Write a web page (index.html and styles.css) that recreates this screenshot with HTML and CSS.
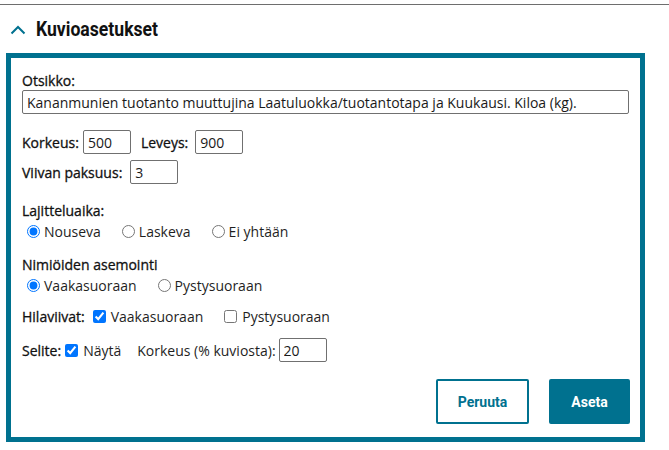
FILE: index.html
```html
<!DOCTYPE html>
<html lang="fi">
<head>
<meta charset="utf-8">
<title>Kuvioasetukset</title>
<link rel="stylesheet" href="styles.css">
</head>
<body>
<div class="topline"></div>
<div class="section-head">
  <svg class="chevron" width="16" height="10" viewBox="0 0 16 10" aria-hidden="true"><polyline points="1.5,8.5 8,2 14.5,8.5" fill="none" stroke="#00718f" stroke-width="2"/></svg>
  <h2 class="section-title"><span class="section-title-text">Kuvioasetukset</span></h2>
</div>
<div class="panel">
  <div class="lbl block">Otsikko:</div>
  <input class="txt title-input" type="text" value="Kananmunien tuotanto muuttujina Laatuluokka/tuotantotapa ja Kuukausi. Kiloa (kg).">

  <div class="row row-size">
    <span class="lbl lbl-k">Korkeus:</span><input class="txt num" type="text" value="500">
    <span class="lbl lbl-l">Leveys:</span><input class="txt num" type="text" value="900">
  </div>
  <div class="row row-line">
    <span class="lbl lbl-v">Viivan paksuus:</span><input class="txt num" type="text" value="3">
  </div>

  <div class="group group-sort">
    <div class="lbl block">Lajitteluaika:</div>
    <div class="opts">
      <label class="opt"><input type="radio" name="sort" checked>Nouseva</label>
      <label class="opt"><input type="radio" name="sort">Laskeva</label>
      <label class="opt"><input type="radio" name="sort">Ei yhtään</label>
    </div>
  </div>

  <div class="group group-pos">
    <div class="lbl block">Nimiöiden asemointi</div>
    <div class="opts">
      <label class="opt"><input type="radio" name="pos" checked>Vaakasuoraan</label>
      <label class="opt"><input type="radio" name="pos">Pystysuoraan</label>
    </div>
  </div>

  <div class="row row-grid">
    <span class="lbl lbl-h">Hilaviivat:</span>
    <label class="chk chk-wide"><input type="checkbox" checked>Vaakasuoraan</label>
    <label class="chk"><input type="checkbox">Pystysuoraan</label>
  </div>

  <div class="row row-legend">
    <span class="lbl lbl-s">Selite:</span>
    <label class="chk chk-mid"><input type="checkbox" checked>Näytä</label>
    <span class="plain">Korkeus (% kuviosta):</span><input class="txt num" type="text" value="20">
  </div>

  <div class="actions">
    <button class="btn btn-outline" type="button">Peruuta</button>
    <button class="btn btn-primary" type="button">Aseta</button>
  </div>
</div>
</body>
</html>
```
FILE: styles.css
```css
html, body {
  margin: 0;
  padding: 0;
  background: #ffffff;
}
body {
  font-family: "Open Sans", "Noto Sans", sans-serif;
  font-size: 14px;
  color: #1f1f1f;
  width: 669px;
  height: 450px;
  overflow: hidden;
}
.topline {
  margin-top: 4px;
  height: 1px;
  background: #6e6e6e;
}
.section-head {
  display: flex;
  align-items: center;
  margin: 12px 0 0 0;
  height: 24px;
}
.chevron {
  margin-left: 10px;
  margin-top: 2px;
}
.section-title {
  margin: 0 0 0 10px;
  font-family: Roboto, "Liberation Sans", sans-serif;
  font-size: 20px;
  font-weight: 700;
  line-height: 24px;
  color: #111111;
}
.section-title-text {
  display: inline-block;
  transform: scaleX(0.88);
  transform-origin: left center;
}
.panel {
  margin: 12px 0 0 6px;
  width: 639px;
  box-sizing: border-box;
  border: 5px solid #00718f;
  padding: 13px 10px 13px 11px;
}
.lbl {
  font-weight: 500;
  color: #111111;
  -webkit-text-stroke: 0.3px #111111;
}
.block {
  display: block;
  line-height: 19px;
}
.txt {
  font-family: "Open Sans", "Noto Sans", sans-serif;
  font-size: 14px;
  color: #1a1a1a;
  height: 24px;
  box-sizing: border-box;
  border: 1px solid #707070;
  border-radius: 2px;
  padding: 0 4px;
  margin: 0;
  background: #fff;
}
.title-input {
  display: block;
  width: 607px;
}
.num {
  width: 48px;
}
.row {
  display: flex;
  align-items: center;
  line-height: 19px;
}
.row-size { margin-top: 16px; }
.row-line { margin-top: 6px; }
.lbl-k { margin-right: 4px; }
.lbl-l { margin: 0 7px 0 10px; }
.lbl-v { margin-right: 8px; }
.group { line-height: 19px; }
.group-sort { margin-top: 17px; }
.group-pos { margin-top: 14px; }
.opts {
  display: flex;
  align-items: center;
  margin-top: 2px;
}
.opt {
  display: inline-flex;
  align-items: center;
  margin-right: 16px;
}
.opt input {
  margin: 0 4px 0 5px;
  width: 13px;
  height: 13px;
  accent-color: #0075ff;
}
.row-grid { margin-top: 12px; }
.row-legend { margin-top: 12px; }
.chk {
  display: inline-flex;
  align-items: center;
}
.chk input {
  margin: 0 5px 0 4px;
  width: 13px;
  height: 13px;
  accent-color: #0075ff;
}
.lbl-h { margin-right: 4px; }
.chk-wide { margin-right: 17px; }
.chk-mid { margin-right: 16px; }
.plain { margin-right: 3px; }
.actions {
  display: flex;
  justify-content: flex-end;
  gap: 20px;
  margin-top: 17px;
}
.btn {
  font-family: Roboto, "Liberation Sans", sans-serif;
  font-size: 14px;
  font-weight: 700;
  height: 45px;
  box-sizing: border-box;
  border-radius: 2px;
  padding: 0;
  cursor: pointer;
}
.btn-outline {
  width: 93px;
  background: #fff;
  color: #00718f;
  border: 2px solid #00718f;
}
.btn-primary {
  width: 81px;
  background: #00718f;
  color: #fff;
  border: 2px solid #00718f;
}
```
